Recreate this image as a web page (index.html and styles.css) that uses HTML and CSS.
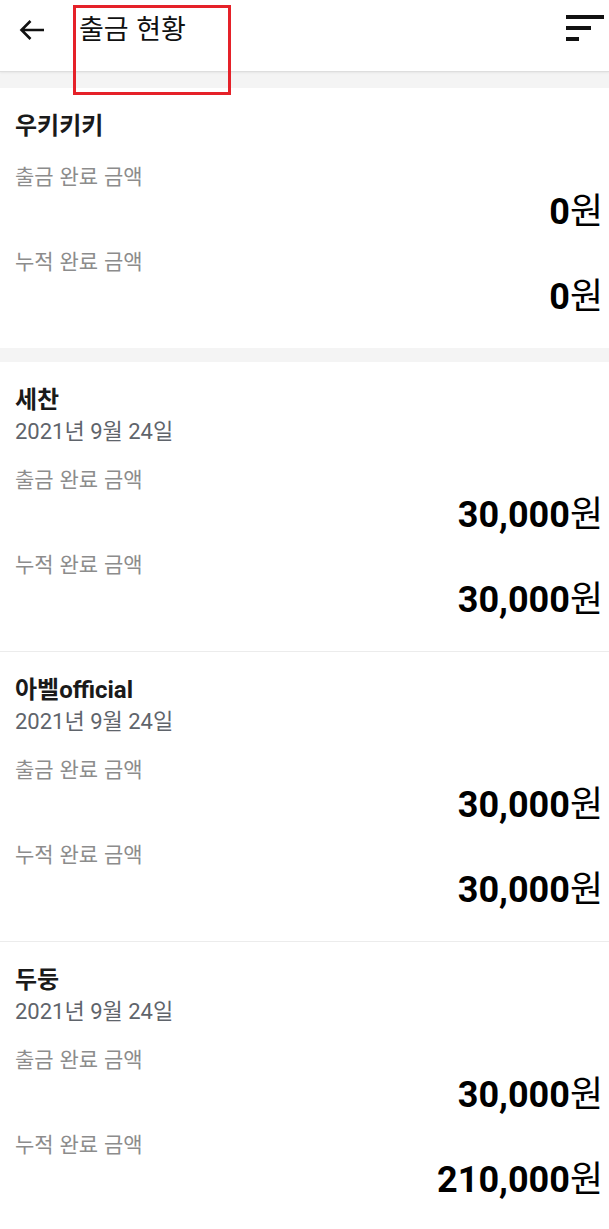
FILE: index.html
```html
<!DOCTYPE html>
<html lang="ko">

<head>
    <meta charset="utf-8" />
    <title>출금 현황</title>
    <link rel="stylesheet" href="styles.css">
</head>

<body>
    <header class="top-bar">
        <button class="icon-btn back-btn" aria-label="뒤로">
            <svg width="26" height="22" viewBox="0 0 26 22">
                <path d="M25 11H3M11.5 2L2.5 11l9 9" fill="none" stroke="#111" stroke-width="2.6" />
            </svg>
        </button>
        <h1 class="title">출금 현황</h1>
        <button class="icon-btn sort-btn" aria-label="정렬">
            <span class="sort-line long"></span>
            <span class="sort-line mid"></span>
            <span class="sort-line short"></span>
        </button>
        <div class="highlight"></div>
    </header>

    <main class="list">
        <section class="card card-first">
            <div class="card-head solo">
                <div class="name">우키키키</div>
            </div>
            <div class="stat">
                <div class="label">출금 완료 금액</div>
                <div class="amount"><b>0</b>원</div>
            </div>
            <div class="stat">
                <div class="label">누적 완료 금액</div>
                <div class="amount"><b>0</b>원</div>
            </div>
        </section>

        <section class="card">
            <div class="card-head">
                <div class="name">세찬</div>
                <div class="date">2021년 9월 24일</div>
            </div>
            <div class="stat">
                <div class="label">출금 완료 금액</div>
                <div class="amount"><b>30,000</b>원</div>
            </div>
            <div class="stat">
                <div class="label">누적 완료 금액</div>
                <div class="amount"><b>30,000</b>원</div>
            </div>
        </section>

        <section class="card">
            <div class="card-head">
                <div class="name">아벨official</div>
                <div class="date">2021년 9월 24일</div>
            </div>
            <div class="stat">
                <div class="label">출금 완료 금액</div>
                <div class="amount"><b>30,000</b>원</div>
            </div>
            <div class="stat">
                <div class="label">누적 완료 금액</div>
                <div class="amount"><b>30,000</b>원</div>
            </div>
        </section>

        <section class="card">
            <div class="card-head">
                <div class="name">두둥</div>
                <div class="date">2021년 9월 24일</div>
            </div>
            <div class="stat">
                <div class="label">출금 완료 금액</div>
                <div class="amount"><b>30,000</b>원</div>
            </div>
            <div class="stat">
                <div class="label">누적 완료 금액</div>
                <div class="amount"><b>210,000</b>원</div>
            </div>
        </section>
    </main>
</body>

</html>
```
FILE: styles.css
```css
body {
    margin: 0;
    background: #fff;
    font-family: Roboto, "Noto Sans CJK KR", sans-serif;
    color: #111;
}

.top-bar {
    position: relative;
    display: flex;
    align-items: center;
    height: 71px;
    background: #fff;
    border-bottom: 1px solid #dedede;
    box-shadow: 0 1px 2px rgba(0, 0, 0, 0.06);
}

.icon-btn {
    border: 0;
    background: none;
    padding: 0;
    display: flex;
}

.back-btn {
    margin: 0 0 12px 19px;
}

.title {
    flex: 1;
    margin: 0 0 16px 34px;
    font-family: "Noto Sans CJK KR", sans-serif;
    font-size: 27px;
    font-weight: 400;
    line-height: 36px;
}

.sort-btn {
    flex-direction: column;
    gap: 7px;
    width: 38px;
    margin: 0 5px 15px 0;
}

.sort-line {
    display: block;
    height: 4px;
    background: #111;
}

.sort-line.long {
    width: 38px;
}

.sort-line.mid {
    width: 25px;
}

.sort-line.short {
    width: 13px;
}

/* red annotation box drawn over the header */
.highlight {
    position: absolute;
    left: 73px;
    top: 5px;
    width: 152px;
    height: 84px;
    border: 3px solid #e52129;
    z-index: 2;
}

.list {
    background: #f4f4f4;
    padding-top: 16px;
}

.card {
    background: #fff;
    padding: 21px 6px 29px 15px;
    border-bottom: 1px solid #ececec;
}

.card-first {
    margin-bottom: 14px;
    border-bottom: 0;
}

.card-head {
    padding-bottom: 5px;
}

.card-head.solo {
    padding-bottom: 6px;
}

.name {
    font-size: 24px;
    font-weight: 700;
    line-height: 34px;
    color: #1a1a1a;
}

.date {
    font-size: 22px;
    line-height: 30px;
    color: #5f646b;
}

.stat {
    margin-top: 11px;
}

.label {
    font-family: "Noto Sans CJK KR", sans-serif;
    font-size: 21px;
    line-height: 30px;
    color: #8c8c8c;
}

.amount {
    text-align: right;
    font-size: 36px;
    line-height: 44px;
    color: #000;
}

.amount b {
    font-weight: 700;
}
```
